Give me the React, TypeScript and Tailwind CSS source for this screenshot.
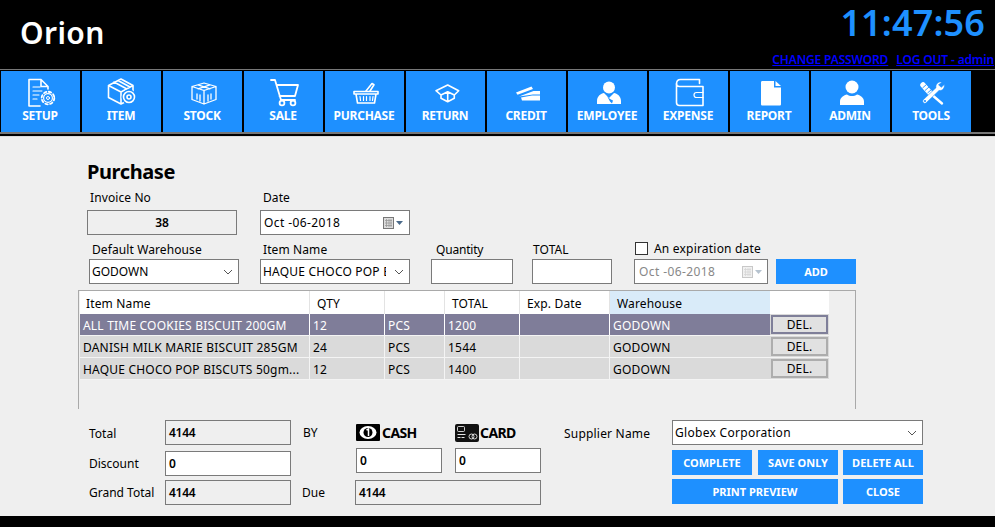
import type { ReactNode } from "react";

const s = { fill: "none", stroke: "white", strokeWidth: 1.6, strokeLinejoin: "round" as const, strokeLinecap: "round" as const };

function Gear({ x, y }: { x: number; y: number }) {
  return (
    <g>
      <circle cx={x} cy={y} r={8.5} fill="#1e90ff" stroke="none" />
      <circle cx={x} cy={y} r={6.3} fill="none" stroke="white" strokeWidth={1.8} strokeDasharray="2.5 2.45" />
      <circle cx={x} cy={y} r={4.4} fill="none" stroke="white" strokeWidth={1.2} />
      <circle cx={x} cy={y} r={1.5} fill="none" stroke="white" strokeWidth={1} />
    </g>
  );
}

const icons: Record<string, ReactNode> = {
  SETUP: (
    <g {...s}>
      <path d="M8 3.500h12l7 7v7M20 3.500v7h7M8 3.500v26.500h11" />
      <path d="M12 11h7M12 15h9M12 19h6M12 23h4" strokeWidth={1.2} />
      <Gear x={27} y={22} />
    </g>
  ),
  ITEM: (
    <g {...s}>
      <path d="M6.500 9.500 19 3l12 6.500v7M6.500 9.500v12L19 28l4-2M6.500 9.500 19 16l12-6.500M19 16v12M12 6l12 6.500M16 4.500l12 6.500" />
      <circle cx={27} cy={21} r={7.500} fill="#1e90ff" stroke="none" />
      <circle cx={27} cy={21} r={5.500} />
      <circle cx={27} cy={21} r={2} />
    </g>
  ),
  STOCK: (
    <g {...s}>
      <path d="M21 7 33 10.500v13L21 28 9 23.500v-13zM9 10.500l12 4 12-4M15 8.800l12 4M27 8.800l-12 4M21 14.500V28M14 18v5M17 19v6M25 19v6M28 18v5" strokeWidth={1.3} />
    </g>
  ),
  SALE: (
    <g {...s}>
      <path d="M7 4h4l6 20h14M12.500 9H34l-3 11H15.500" strokeWidth={1.8} />
      <circle cx={18} cy={27} r={2.400} strokeWidth={1.8} />
      <circle cx={29} cy={27} r={2.400} strokeWidth={1.8} />
    </g>
  ),
  PURCHASE: (
    <g {...s}>
      <path d="M21 15 27 7.500l2 1.200-4 6.300" />
      <path d="M9 15.500h24v2.500H9zM11 18l1.500 9h17l1.500-9" />
      <path d="M15 20.500l.5 4M18.500 20.500v4M21.500 20.500v4M25 20.500v4M28 20.500l-.5 4" strokeWidth={1.2} />
    </g>
  ),
  RETURN: (
    <g {...s}>
      <path d="M10 14.700 21.700 9l11 5.700-4.400 4.300-6.600-3.300L15 19zM15 19v3.300l6.700 3.400 6.600-3.400V19M21.700 15.700v10" />
    </g>
  ),
  CREDIT: (
    <g fill="white">
      <path d="M9 16.500 24.500 10.500l1.500 2.500-15.500 5.800z" />
      <path d="M12 20.500 26.500 15H33v3.500H26z" />
      <path d="M14 21.500 25 19.500h8V24.500H15z" />
    </g>
  ),
  EMPLOYEE: (
    <g fill="white">
      <circle cx={21} cy={11.500} r={6} />
      <path d="M9 28v-3c0-5 4-7.500 7-8l5 5 5-5c3 .5 7 3 7 8v3z" />
      <path d="M19 20l3 3 3 1.500-1 3-2-2z" fill="#1e90ff" />
    </g>
  ),
  EXPENSE: (
    <g {...s}>
      <path d="M7.500 8c0-3 1.500-4.500 4-4.500H30.500V7.500" />
      <path d="M7.500 8c0 2 1.500 2.500 3 2.500H34v19H10.500c-2 0-3-1-3-3z" />
      <path d="M34 16.500h-6.500a2.500 2.500 0 0 0 0 5H34" strokeWidth={1.2} />
    </g>
  ),
  REPORT: (
    <g fill="white">
      <path d="M11 6.500c0-1 .5-1.500 1.500-1.500H24v6.500h7V28c0 1-.5 1.500-1.500 1.500h-17c-1 0-1.500-.5-1.500-1.500z" />
      <path d="M25.500 5 31 10h-5.500z" />
    </g>
  ),
  ADMIN: (
    <g fill="white">
      <circle cx={21} cy={11} r={6.500} />
      <path d="M9 29v-3.500c0-4 4-6.500 7-7 3 2 7 2 10 0 3 .5 7 3 7 7V29z" />
    </g>
  ),
  TOOLS: (
    <g>
      <path d="M11 9 19 18" stroke="white" strokeWidth={5.500} strokeLinecap="round" />
      <path d="M19 18 30 27.500" stroke="white" strokeWidth={2.400} strokeLinecap="round" />
      <path d="M10.500 12l4-3.500M13 14.500l4-3.500M15.500 17l4-3.500" stroke="#1e90ff" strokeWidth={0.9} />
      <path d="M30 6.200c-3.500-1-6.700 1.800-6 5.500L11.500 23.500c-2.200 2.200 1 5.200 3 3L27 14.500c3.500.5 6-2.500 5.300-6l-3 2.800-2.800-2.500z" fill="white" stroke="#1e90ff" strokeWidth={0.6} />
      <circle cx={13} cy={25} r={1.100} fill="#1e90ff" />
    </g>
  ),
};

const nav = ["SETUP", "ITEM", "STOCK", "SALE", "PURCHASE", "RETURN", "CREDIT", "EMPLOYEE", "EXPENSE", "REPORT", "ADMIN", "TOOLS"];

const rows = [
  { name: "ALL TIME COOKIES BISCUIT 200GM", qty: "12", total: "1200", selected: true },
  { name: "DANISH MILK MARIE BISCUIT 285GM", qty: "24", total: "1544", selected: false },
  { name: "HAQUE CHOCO POP BISCUTS 50gm...", qty: "12", total: "1400", selected: false },
];

function Chevron() {
  return (
    <svg width="10" height="6" viewBox="0 0 10 6" className="shrink-0">
      <path d="M1 1l4 4 4-4" fill="none" stroke="#555" strokeWidth="1" />
    </svg>
  );
}

function CalendarIcon({ muted }: { muted?: boolean }) {
  return (
    <svg width="24" height="14" viewBox="0 0 24 14" className={muted ? "shrink-0 opacity-40" : "shrink-0"}>
      <rect x="1.500" y="1.500" width="10" height="11" fill="#ddd" stroke="#777" />
      <path d="M3 4.500h7M3 7h7M3 9.500h7M4.500 3v8M7 3v8M9 3v8" stroke="#999" strokeWidth="0.8" />
      <path d="M14 5h7l-3.500 4z" fill="#4a6a8a" />
    </svg>
  );
}

function Field({ className, value, gray, bold }: { className: string; value?: string; gray?: boolean; bold?: boolean }) {
  return (
    <div
      className={`h-[25px] shrink-0 border border-[#7a7a7a] flex items-center px-[3px] text-[12px] text-black ${gray ? "bg-[#efefef]" : "bg-white"} ${bold ? "font-semibold tracking-[-0.3px]" : ""} ${className}`}
    >
      {value}
    </div>
  );
}

function Btn({ className, children }: { className: string; children: ReactNode }) {
  return (
    <button className={`h-[25px] pt-[1px] shrink-0 bg-[#1e90ff] text-white text-[11px] font-bold flex items-center justify-center ${className}`}>
      {children}
    </button>
  );
}

export default function App() {
  return (
    <div className="w-[995px] h-[527px] bg-black overflow-hidden font-['Noto_Sans',sans-serif] text-[12px] text-black">
      <header className="h-[69px] flex justify-between">
        <div className="pl-5 pt-[13px] text-[30px] leading-[40px] font-semibold text-white tracking-[0.4px]">Orion</div>
        <div className="flex flex-col items-end">
          <div className="pr-[10px] pt-[1px] text-[36px] leading-[44px] font-semibold text-[#1e90ff] tracking-[0.15px]">11:47:56</div>
          <div className="mt-[7px] pr-[1px] text-[12px] leading-[16px] font-semibold text-[#0000ff] tracking-[-0.15px] flex gap-2">
            <span className="underline">CHANGE PASSWORD</span>
            <span className="underline">LOG OUT - admin</span>
          </div>
        </div>
      </header>
      <nav className="h-[65px] border-t border-[#777] pt-[1px] pl-[1px] flex gap-[2px] border-b-[2px] border-b-[#777]">
        {nav.map((label) => (
          <div key={label} className="w-[79px] h-[61px] bg-[#1e90ff] flex flex-col items-center text-white">
            <svg width="40" height="32" viewBox="0 0 40 32" className="mt-[5px]">
              {icons[label]}
            </svg>
            <span className="pr-[1px] text-[12px] leading-[16px] font-bold tracking-[-0.25px]">{label}</span>
          </div>
        ))}
      </nav>
      <main className="h-[380px] mt-[2px] bg-[#efefef] pt-[21px] pl-[87px] border-t border-[#ddd]">
        <h1 className="text-[20px] leading-[27px] font-bold tracking-[-0.4px]">Purchase</h1>

        <div className="flex mt-[4px] h-[18px] leading-[18px] tracking-[0.1px]">
          <span className="ml-[3px] w-[173px]">Invoice No</span>
          <span>Date</span>
        </div>
        <div className="flex mt-[3px]">
          <Field className="w-[150px] justify-center font-semibold" value="38" gray />
          <div className="w-[150px] h-[25px] ml-[23px] border border-[#7a7a7a] bg-white flex items-center justify-between px-[3px] tracking-[0.4px]">
            Oct -06-2018
            <CalendarIcon />
          </div>
        </div>

        <div className="flex h-[18px] mt-[6px] leading-[18px] tracking-[0.1px]">
          <span className="ml-[5px] w-[171px]">Default Warehouse</span>
          <span className="w-[173px]">Item Name</span>
          <span className="w-[97px] tracking-[-0.2px]">Quantity</span>
          <span className="w-[102px]">TOTAL</span>
          <div className="flex items-center -mt-[3px] gap-[6px]">
            <span className="w-[13px] h-[13px] border border-[#333] bg-white" />
            <span className="tracking-[0.2px]">An expiration date</span>
          </div>
        </div>
        <div className="flex h-[25px]">
          <div className="ml-[2px] w-[150px] h-[25px] border border-[#7a7a7a] bg-white flex items-center justify-between pl-[2px] pr-[5px]">
            GODOWN
            <Chevron />
          </div>
          <div className="ml-[21px] w-[150px] h-[25px] border border-[#7a7a7a] bg-white flex items-center justify-between pl-[2px] pr-[5px]">
            <span className="w-[123px] overflow-hidden whitespace-nowrap tracking-[0.2px]">HAQUE CHOCO POP BISCUTS</span>
            <Chevron />
          </div>
          <Field className="ml-[21px] w-[82px]" />
          <Field className="ml-[19px] w-[80px]" />
          <div className="ml-[22px] w-[134px] h-[25px] border border-[#7a7a7a] bg-white flex items-center justify-between pl-[4px] pr-[2px] text-[#888] tracking-[0.4px]">
            Oct -06-2018
            <CalendarIcon muted />
          </div>
          <Btn className="ml-[8px] w-[80px]">ADD</Btn>
        </div>

        <section className="-ml-[9px] mt-[6px] w-[778px] h-[119px] border-l border-r border-t border-[#a9a9a9] pl-[1px]">
          <div className="w-[749px] flex h-[23px] bg-white leading-[25px] tracking-[0.15px]">
            <div className="w-[230px] pl-[6px] border-r border-[#e3e3e3]">Item Name</div>
            <div className="w-[75px] pl-[7px] border-r border-[#e3e3e3]">QTY</div>
            <div className="w-[60px] border-r border-[#e3e3e3]" />
            <div className="w-[75px] pl-[7px] border-r border-[#e3e3e3]">TOTAL</div>
            <div className="w-[90px] pl-[7px] border-r border-[#e3e3e3]">Exp. Date</div>
            <div className="w-[160px] pl-[7px] bg-[#d9ebf9]">Warehouse</div>
            <div className="w-[59px]" />
          </div>
          {rows.map((r) => {
            const cell = r.selected ? "border-r border-white text-white" : "border-r border-[#f4f4f4] text-black";
            return (
              <div key={r.name} className={`w-[749px] flex h-[22px] leading-[23px] tracking-[0.2px] border-b border-[#f4f4f4] ${r.selected ? "bg-[#7f7d99]" : "bg-[#dadada]"}`}>
                <div className={`w-[230px] pl-[3px] whitespace-nowrap overflow-hidden ${cell}`}>{r.name}</div>
                <div className={`w-[75px] pl-[3px] ${cell}`}>{r.qty}</div>
                <div className={`w-[60px] pl-[3px] ${cell}`}>PCS</div>
                <div className={`w-[75px] pl-[3px] ${cell}`}>{r.total}</div>
                <div className={`w-[90px] pl-[3px] ${cell}`}>{""}</div>
                <div className={`w-[160px] pl-[3px] ${r.selected ? "text-white" : "text-black"}`}>GODOWN</div>
                <div className="w-[59px] p-[1px] bg-[#dadada]">
                  <div className={`h-[19px] w-[57px] border-2 leading-[16px] text-center bg-[#e1e1e1] ${r.selected ? "border-[#7f7f99]" : "border-[#adadad]"}`}>DEL.</div>
                </div>
              </div>
            );
          })}
        </section>

        <section className="flex mt-[11px] -ml-[87px]">
          <div className="w-[355px] pl-[89px] flex flex-col">
            <div className="flex items-center h-[25px]">
              <span className="w-[76px] pt-[2px]">Total</span>
              <Field className="w-[126px]" value="4144" gray bold />
              <span className="ml-[12px]">BY</span>
            </div>
            <div className="flex items-center h-[25px] mt-[6px]">
              <span className="w-[76px] pt-[1px]">Discount</span>
              <Field className="w-[126px]" value="0" bold />
            </div>
            <div className="flex items-center h-[25px] mt-[4px]">
              <span className="w-[76px]">Grand Total</span>
              <Field className="w-[126px]" value="4144" gray bold />
              <span className="ml-[11px] pt-[1px]">Due</span>
            </div>
          </div>
          <div className="w-[209px] flex flex-col">
            <div className="flex h-[25px] items-center font-bold text-[14px] tracking-[-0.6px]">
              <div className="ml-[1px] w-[99px] flex items-center gap-[2px]">
                <svg width="24" height="17" viewBox="0 0 24 17" className="shrink-0">
                  <rect width="24" height="17" rx="1" fill="#000" />
                  <ellipse cx="12" cy="8.500" rx="8.500" ry="6.500" fill="white" />
                  <circle cx="12" cy="8.500" r="4.500" fill="#000" />
                  <path d="M10.500 6l2-1v7" stroke="white" strokeWidth="1.500" fill="none" />
                </svg>
                CASH
              </div>
              <div className="flex items-center gap-[1px]">
                <svg width="24" height="18" viewBox="0 0 24 18" className="shrink-0">
                  <rect width="24" height="18" rx="2" fill="#111" />
                  <rect x="2.500" y="2.500" width="7" height="5" rx="1" fill="none" stroke="white" strokeWidth="0.800" />
                  <path d="M2.500 10.500h8M2.500 13.500h3M6.500 13.500h3" stroke="white" strokeWidth="0.900" />
                  <circle cx="16.500" cy="12.500" r="2.500" fill="none" stroke="white" strokeWidth="0.800" />
                  <circle cx="19.500" cy="12.500" r="2.500" fill="none" stroke="white" strokeWidth="0.800" />
                </svg>
                CARD
              </div>
            </div>
            <div className="flex mt-[3px] ml-[1px] gap-[13px]">
              <Field className="w-[86px]" value="0" bold />
              <Field className="w-[86px]" value="0" bold />
            </div>
            <Field className="w-[186px] mt-[7px]" value="4144" gray bold />
          </div>
          <div className="flex">
            <span className="w-[108px] h-[25px] pt-[2px] leading-[24px] tracking-[0.2px]">Supplier Name</span>
            <div className="w-[251px]">
              <div className="h-[25px] border border-[#7a7a7a] bg-white flex items-center justify-between pl-[2px] pr-[5px] tracking-[0.3px]">
                Globex Corporation
                <Chevron />
              </div>
              <div className="flex mt-[5px]">
                <Btn className="w-[80px]">COMPLETE</Btn>
                <Btn className="w-[80px] ml-[6px]">SAVE ONLY</Btn>
                <Btn className="w-[80px] ml-[5px]">DELETE ALL</Btn>
              </div>
              <div className="flex mt-[4px]">
                <Btn className="w-[166px]">PRINT PREVIEW</Btn>
                <Btn className="w-[80px] ml-[5px]">CLOSE</Btn>
              </div>
            </div>
          </div>
        </section>
      </main>
    </div>
  );
}
